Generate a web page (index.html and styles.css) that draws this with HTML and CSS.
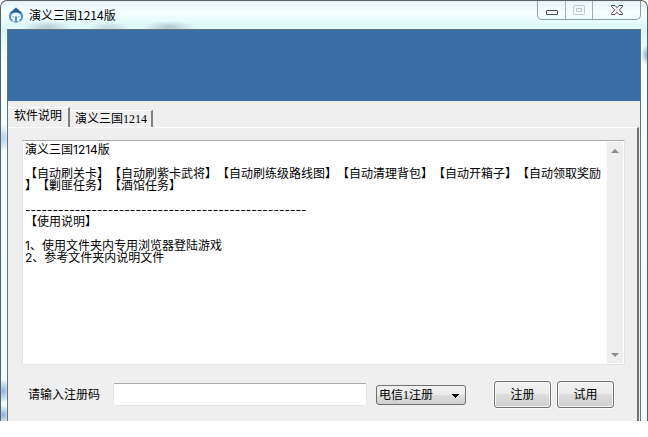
FILE: index.html
```html
<!DOCTYPE html>
<html lang="zh-CN">
  <head>
    <meta charset="utf-8" />
    <title>演义三国1214版</title>
    <link rel="stylesheet" href="styles.css">
  </head>

  <body>
    <div class="window">
      <header class="titlebar">
        <svg class="logo" viewBox="0 0 16 16" aria-hidden="true">
          <path d="M8 0.5C10 3 15 4.5 15 9.5C15 13 12 15.5 8 15.5S1 13 1 9.5C1 4.5 6 3 8 0.5Z" fill="#4a8cc8" />
          <path d="M8 0.5C9 2.5 13 4 14 7.5C11 3.8 5 3.8 2 7.5C3 4 7 2.5 8 0.5Z" fill="#245a90" />
          <path d="M3 9C3 4.5 13 4.5 13 9V12H11.5V14.5H9V9.5H7V14.5H4.5V12H3Z" fill="#e8f5fd" />
          <path d="M4.5 9H5.5V11H4.5ZM10.5 9H11.5V11H10.5Z" fill="#8dbbe2" />
        </svg>
        <span class="title">演义三国1214版</span>
        <div class="controls">
          <button type="button" aria-label="最小化">
            <svg width="12" height="5" viewBox="0 0 12 5"><rect x="0.5" y="0.5" width="11" height="4" rx="0.5" fill="#f4f4f4" stroke="#4b4d5e" /></svg>
          </button>
          <button type="button" aria-label="最大化" disabled>
            <svg width="12" height="10" viewBox="0 0 12 10"><g fill="none" stroke="#c1c9c9"><rect x="0.5" y="0.5" width="11" height="9" rx="1" /><rect x="3.5" y="3.5" width="5" height="3" /></g></svg>
          </button>
          <button type="button" class="close" aria-label="关闭">
            <svg width="12" height="10" viewBox="0 0 12 10"><path d="M0.5 0.5H4L6 2.7L8 0.5H11.5V1.5L8.3 5L11.5 8.5V9.5H8L6 7.3L4 9.5H0.5V8.5L3.7 5L0.5 1.5Z" fill="#f4f4f4" stroke="#4b4d5e" /></svg>
          </button>
        </div>
      </header>

      <main class="client">
        <div class="banner"></div>
        <div class="tabs" role="tablist">
          <button type="button" class="tab active" role="tab" aria-selected="true">软件说明</button>
          <button type="button" class="tab" role="tab" aria-selected="false">演义三国1214</button>
        </div>
        <div class="panel" role="tabpanel">
          <div class="memo">
            <textarea class="memo-text" aria-label="软件说明" readonly>演义三国1214版

【自动刷关卡】【自动刷紫卡武将】【自动刷练级路线图】【自动清理背包】【自动开箱子】【自动领取奖励】【剿匪任务】【酒馆任务】

---------------------------------------------------
【使用说明】

1、使用文件夹内专用浏览器登陆游戏
2、参考文件夹内说明文件</textarea>
            <div class="scrollbar">
              <button type="button" aria-label="向上">
                <svg width="8" height="4" viewBox="0 0 8 4"><path d="M0 4L4 0L8 4Z" fill="#8c8c8c" /></svg>
              </button>
              <button type="button" aria-label="向下">
                <svg width="8" height="4" viewBox="0 0 8 4"><path d="M0 0H8L4 4Z" fill="#8c8c8c" /></svg>
              </button>
            </div>
          </div>

          <form class="register">
            <label for="code">请输入注册码</label>
            <input type="text" id="code" />
            <select aria-label="注册线路">
              <option>电信1注册</option>
            </select>
            <div class="actions">
              <button type="button">注册</button>
              <button type="button">试用</button>
            </div>
          </form>
        </div>
      </main>
    </div>
  </body>
</html>
```
FILE: styles.css
```css
* {
  box-sizing: border-box;
}

body {
  display: flex;
  height: 100vh;
  margin: 0;
  padding-bottom: 16px;
  background: #fff;
  font-family: "Liberation Serif", "Noto Sans CJK SC", sans-serif;
  font-size: 12px;
  line-height: 12px;
  color: #000;
}

button,
input,
select,
textarea {
  margin: 0;
  font: inherit;
  color: inherit;
}

.window {
  flex: 1;
  display: flex;
  flex-direction: column;
  padding: 0 6px;
  border: 1px solid #5b5f62;
  border-bottom: none;
  border-radius: 7px 7px 0 0;
  background:
    radial-gradient(ellipse 24px 6px at 46px 26px, #9aaabb99, transparent),
    radial-gradient(ellipse 20px 5px at 108px 26px, #a9bac888, transparent),
    radial-gradient(ellipse 26px 6px at 168px 26px, #94a5b699, transparent),
    radial-gradient(ellipse 8px 12px at 2px 390px, #8fb0d8, transparent),
    radial-gradient(ellipse 8px 10px at 2px 414px, #8fb0d8, transparent),
    radial-gradient(ellipse 8px 14px at 2px 137px, #b4cfee, transparent),
    radial-gradient(ellipse 6px 10px at right 54px, #8ea6dd, transparent),
    linear-gradient(#e6f5fb, #f4fefe 12px, #d8f8fa 28px, #f4ffff 60px, #eefcfd);
}

.titlebar {
  display: flex;
  align-items: flex-start;
  height: 28px;
}

.logo {
  width: 16px;
  height: 16px;
  margin: 6px 5px 0 1px;
}

.title {
  flex: 1;
  padding-top: 8px;
  font-family: "Noto Sans CJK SC", sans-serif;
}

.controls {
  display: flex;
  height: 19px;
  border: 1px solid #93a0a3;
  border-top: none;
  border-radius: 0 0 5px 5px;
}

.controls button {
  display: flex;
  align-items: center;
  justify-content: center;
  width: 27px;
  padding: 0;
  border: none;
  border-right: 1px solid #a3b0b3;
  background: none;
}

.controls button:first-child {
  width: 28px;
  padding-top: 5px;
}

.controls .close {
  width: 47px;
  border-right: none;
}

.client {
  flex: 1;
  display: flex;
  flex-direction: column;
  border: 1px solid #66727a;
  border-bottom: none;
  background: #efefef;
}

.banner {
  height: 71px;
  background: #3b6ea5;
}

.tabs {
  display: flex;
  align-items: flex-end;
  height: 26px;
  gap: 1px;
}

.tab {
  height: 17px;
  padding: 0 4px;
  border: none;
  border-top: 1px solid #fff;
  border-right: 2px solid #808080;
  background: none;
}

.tab.active {
  height: 20px;
  padding: 0 6px 4px;
}

.panel {
  flex: 1;
  margin-right: 1px;
  padding: 12px 12px 0 14px;
  border-top: 1px solid #fff;
  border-right: 2px solid #747474;
}

.memo {
  display: flex;
  height: 225px;
  border: 1px solid #e2e5ee;
  border-top-color: #a7a9ad;
  background: #fff;
}

.memo-text {
  flex: 1;
  min-width: 0;
  padding: 3px 2px 0;
  border: none;
  outline: none;
  resize: none;
  background: none;
  overflow: hidden;
  font-family: Inter, "Noto Sans CJK SC", sans-serif;
  line-height: 12px;
  line-break: anywhere;
  text-spacing-trim: space-all;
}

.scrollbar {
  display: flex;
  flex-direction: column;
  justify-content: space-between;
  width: 16px;
  margin: 1px;
  background: #eee;
}

.scrollbar button {
  display: flex;
  align-items: center;
  justify-content: center;
  height: 17px;
  padding: 0;
  border: none;
  background: none;
}

.register {
  display: flex;
  align-items: center;
  padding: 16px 11px 0 6px;
}

.register label {
  margin-right: 13px;
}

.register input {
  flex: 1;
  min-width: 0;
  height: 23px;
  border: 1px solid #e2e5ee;
  border-top-color: #a7a9ad;
  border-radius: 2px;
  background: #fff;
}

.register select {
  width: 90px;
  height: 20px;
  margin: 0 28px 0 9px;
  padding: 0 2px;
  border: 1px solid #707070;
  border-radius: 3px;
  appearance: none;
  background:
    linear-gradient(to bottom right, #000 50%, transparent 50%) 79px 8px / 4px 4px no-repeat,
    linear-gradient(to bottom left, #000 50%, transparent 50%) 75px 8px / 4px 4px no-repeat,
    linear-gradient(#f2f2f2, #ebebeb 50%, #ddd 50%, #cfcfcf);
}

.actions {
  display: flex;
  gap: 6px;
}

.actions button {
  width: 57px;
  height: 27px;
  padding: 0;
  border: 1px solid #707070;
  border-radius: 3px;
  background: linear-gradient(#f2f2f2, #ebebeb 50%, #ddd 50%, #cfcfcf);
  box-shadow: inset 0 0 0 1px #f6f6f6, 0 0 0 1px #fafafa;
}
```
